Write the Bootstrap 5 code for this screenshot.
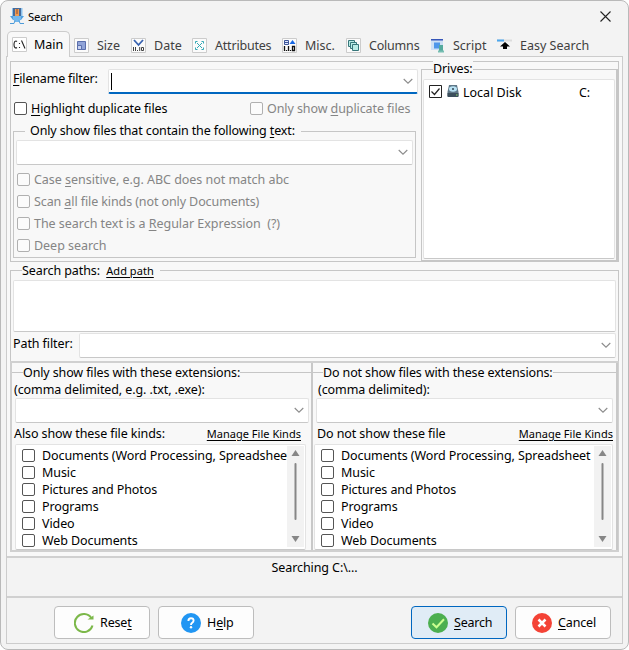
<!DOCTYPE html>
<html lang="en">
<head>
<meta charset="utf-8">
<title>Search</title>
<link href="https://cdn.jsdelivr.net/npm/bootstrap@5.3.0/dist/css/bootstrap.min.css" rel="stylesheet">
<style>
body{width:629px;height:650px;overflow:hidden;background:#fff;color:#000;font:12.5px/17px "Noto Sans","Open Sans",sans-serif;letter-spacing:-.09px}
*{white-space:nowrap}
svg{display:block;flex:none}
.win{width:629px;height:650px;background:#f3f3f3;border:1px solid #b9b9b9;border-radius:8px;padding:0 5px 5px}
.titlebar{height:30px;padding:0 12px 0 4px}
.titlebar .cap{font-size:11.3px;letter-spacing:-.2px;margin-left:4px}
.tabs{height:25px;position:relative;z-index:1;color:#404040;padding-left:1px}
.tabitem{height:26px;padding-top:2px;letter-spacing:0}
.tabitem svg{margin-right:8px}
.tabitem.on{width:63px;border:1px solid #ccc;border-bottom:0;border-radius:5px 5px 0 0;background:#f8f8f8;color:#000;padding:0 0 1px 4px;margin-right:4px}
.tabitem.on svg{margin-right:7px}
.page{height:588px;border:1px solid #ccc;background:#f8f8f8}
.pane{height:499px;padding:4px 3px 0 3px}
.outer{border:1px solid #c6c6c6}
.p1{height:201px}
.fname{height:33px;padding-top:7px}
.inp{background:#fff;border:1px solid #e3e3e3;border-bottom-color:#c8c8c8;border-radius:2px;display:flex;align-items:center;justify-content:flex-end;padding-right:4px}
.inp.act{border-bottom:2px solid #0067c0;height:25px;width:310px;justify-content:space-between;padding-left:2px}
.caret-line{width:1px;height:17px;background:#000}
.cb{width:13px;height:13px;border:1px solid #555;border-radius:2px;background:#fff;flex:none;display:block}
.off{color:#858585;letter-spacing:-.03px}
.off .cb{border-color:#b0b0b0;background:#fbfbfb}
.grp{border:1px solid #c6c6c6}
.lg{display:table;background:#f8f8f8;line-height:16px}
u{text-underline-offset:2px}
.ck{height:22px}
.lnk{font-size:11px;color:#000;text-decoration:underline;text-underline-offset:2px}
.g1{width:403px;height:127px;margin:4px 0 0 2px;padding:0 2px}
.g2{width:197px;height:192px;margin-top:7px;padding:0 1px;border-right-width:2px}
.p2{height:92px;margin-top:8px;padding:0 2px}
.p3{height:191px;border-width:2px 1px 2px 2px;border-color:#d0d0d0}
.col-x{width:299px;padding:9px 0 0 0}
.col-x+.col-x{width:auto;flex:1 1 0;min-width:0;border-left:2px solid #c8c8c8;border-right:2px solid #c8c8c8}
.topl{border-top:1px solid #c6c6c6;height:178px}
.list{height:106px;background:#fff;border:1px solid #e3e3e3;border-bottom-color:#c8c8c8;border-radius:2px;padding:2px 0 0 6px}
.list .names{flex:1 1 0;min-width:0;overflow:hidden}
.list .names>div{height:17px}
.list .names .cb{margin-right:7px;height:13px}
.sb{width:17px;height:101px;background:#f2f2f2;margin:-1px 1px 0 0}
.stat{height:42px;background:#f3f3f3;border-top:2px solid #d0d0d0;border-bottom:2px solid #d0d0d0;padding-top:1px}
.foot{height:45px;background:#f3f3f3;padding:8px 11px 0 47px}
.wbtn{width:96px;height:33px;border:1px solid #bdbdbd;border-radius:4px;background:#fdfdfd;color:#000;font-size:12.5px;padding:0;display:flex;align-items:center;letter-spacing:-.15px}
.wbtn svg{margin:0 6px 0 19px}
.wbtn.prim{background:#e0ecf6;border-color:#0067c0}
</style>
<script src="https://cdn.jsdelivr.net/npm/bootstrap@5.3.0/dist/js/bootstrap.bundle.min.js"></script>
</head>
<body>
<svg width="0" height="0" class="position-absolute"><defs>
<path id="chev" d="M.7 1 5 5.2 9.3 1" fill="none" stroke="#8c8c8c" stroke-width="1.1"/>
<g id="bars"><path d="M8.500 4 12.500 10h-8z" fill="#868686"/><path d="M4.500 90h8l-4 6z" fill="#868686"/><rect x="7.500" y="17" width="2" height="57" rx="1" fill="#868686"/></g>
</defs></svg>
<div class="win">
  <div class="titlebar d-flex align-items-center">
    <svg width="14" height="16" viewBox="0 0 14 16"><path d="M2 0h2.500v9H2zM10 0h2.500v9H10z" fill="#8dc3ee"/><path d="M3 0h8v8H3z" fill="#466c9c"/><path d="M5 1h4v7H5z" fill="#ef9b54"/><path d="M6.500 1h1v5h-1z" fill="#8b4d33"/><path d="M0 8h14l-3 4H3z" fill="#4d9edf"/><path d="M3 8h8v3l-2 3H5l-2-3z" fill="#74b8ed"/><path d="M0 15.500h4l1-3M14 15.500h-4l-1-3" stroke="#4d9bd8" fill="none"/></svg>
    <span class="cap">Search</span>
    <svg class="ms-auto" width="11" height="11" viewBox="0 0 11 11"><path d="M.5.5l10 10M10.500.5l-10 10" stroke="#222" stroke-width="1.100"/></svg>
  </div>
  <div class="tabs d-flex">
    <div class="tabitem on d-flex align-items-center"><svg width="15" height="15" viewBox="0 0 15 15"><path d="M.5.5h14v14H.5z" fill="#fff" stroke="#ccc"/><path d="M5 4.500Q4 3.500 2.800 4.500 2 5.500 2 7.500t.8 3q1.200 1 2.200 0M7.500 6v1M7.500 10v1M9.500 3.500l3.500 8" fill="none" stroke="#222" stroke-width="1.100"/></svg>Main</div>
    <div class="tabitem d-flex align-items-center" style="width:57px"><svg width="15" height="15" viewBox="0 0 15 15"><path d="M.5.5h14v14H.5z" fill="#fbfbfb" stroke="#ccc"/><path d="M3.500 3.500h8v8h-8z" fill="#91a4d8" stroke="#5b6fac"/><path d="M3.500 7.500h4v4h-4z" fill="#c7d2f0" stroke="#5b6fac"/></svg>Size</div>
    <div class="tabitem d-flex align-items-center" style="width:61px"><svg width="15" height="15" viewBox="0 0 15 15"><path d="M.5.5h14v14H.5z" fill="#fbfbfb" stroke="#ccc"/><path d="M3 2l4.500 5L12 2" fill="none" stroke="#3862b0" stroke-width="1.800"/><path d="M2.500 9v4M4.500 9v4M6.500 12v1M8.700 9v4M10.500 9.500h2v3h-2z" fill="none" stroke="#444"/></svg>Date</div>
    <div class="tabitem d-flex align-items-center" style="width:90px"><svg width="15" height="15" viewBox="0 0 15 15"><path d="M.5.5h14v14H.5z" fill="#fbfbfb" stroke="#ccc"/><path d="M3.500 5.500v-2h2M9.500 3.500h2v2M11.500 9.500v2h-2M5.500 11.500h-2v-2M5 5l5 5M10 5l-5 5" fill="none" stroke="#33a8b5"/></svg><span style="letter-spacing:-.2px">Attributes</span></div>
    <div class="tabitem d-flex align-items-center" style="width:64px"><svg width="15" height="15" viewBox="0 0 15 15"><path d="M.5.5h14v14H.5z" fill="#fbfbfb" stroke="#ccc"/><path d="M2.500 2.500h4v4h-4zM2.500 4.500h4" fill="#dfe8ff" stroke="#3c5599"/><path d="M10.500 2l3 4h-6z" fill="#1667e4"/><path d="M2.500 8v5M4.500 12v1M6.500 8v5M8.500 12v1M10.500 8.500h2v4h-2z" fill="none" stroke="#111" stroke-width="1.300"/></svg>Misc.</div>
    <div class="tabitem d-flex align-items-center" style="width:84px"><svg width="15" height="15" viewBox="0 0 15 15"><path d="M.5.5h14v14H.5z" fill="#fbfbfb" stroke="#ccc"/><g fill="#b9ece6" stroke="#36767a"><path d="M2.500 2.500h6v6h-6z"/><path d="M4.500 4.500h6v6h-6z"/><path d="M6.500 6.500h6v6h-6z"/></g></svg><span style="letter-spacing:-.2px">Columns</span></div>
    <div class="tabitem d-flex align-items-center" style="width:67px"><svg width="15" height="15" viewBox="0 0 15 15"><path d="M1 1h12v11H1z" fill="#cfe0f5"/><path d="M1 1h12v1.500H1z" fill="#3555b8"/><path d="M4 4.500h6v6H4z" fill="#4e96ea"/><path d="M9 7h4v7H9z" fill="#55aa9d"/><path d="M8 12.500h6v2H8z" fill="#77beb2"/></svg>Script</div>
    <div class="tabitem d-flex align-items-center"><svg width="15" height="15" viewBox="0 0 15 15"><path d="M0 1.500h15v2H0z" fill="#dcdcdc"/><path d="M0 1.500h7v2H0z" fill="#4ba7ee"/><path d="M8 4l5 4.500h-3V11H6V8.500H3z" fill="#000"/></svg>Easy Search</div>
  </div>
  <div class="page">
    <div class="pane">
      <div class="outer p1 d-flex justify-content-between">
        <div>
          <div class="fname d-flex"><span style="width:97px;padding:1px 0 0 2px;letter-spacing:-.18px"><u>F</u>ilename filter:</span><div class="inp act"><i class="caret-line"></i><svg width="10" height="7"><use href="#chev"/></svg></div></div>
          <div class="d-flex align-items-center" style="height:26px"><span class="d-flex align-items-center" style="width:239px;padding-left:3px"><i class="cb me-1"></i><span><u>H</u>ighlight duplicate files</span></span><span class="off d-flex align-items-center" style="letter-spacing:-.09px"><i class="cb me-1"></i><span>Only show <u>d</u>uplicate files</span></span></div>
          <div class="grp g1" style="margin-top:10px"><div class="lg" style="margin:-9px 0 0 9px;padding:0 6px 0 5px;letter-spacing:-.13px">Only show files that contain the following <u>t</u>ext:</div>
            <div class="inp" style="height:25px;margin-top:1px"><svg width="10" height="7"><use href="#chev"/></svg></div>
            <div class="off" style="padding:3px 0 0 1px">
              <div class="ck d-flex align-items-center"><i class="cb me-1"></i><span>Case <u>s</u>ensitive, e.g. ABC does not match abc</span></div>
              <div class="ck d-flex align-items-center"><i class="cb me-1"></i><span style="letter-spacing:-.1px">Scan <u>a</u>ll file kinds (not only Documents)</span></div>
              <div class="ck d-flex align-items-center"><i class="cb me-1"></i><span>The search text is a <u>R</u>egular Expression &nbsp;(?)</span></div>
              <div class="ck d-flex align-items-center"><i class="cb me-1"></i><span>Deep search</span></div>
            </div>
          </div>
        </div>
        <div class="grp g2"><div class="lg" style="margin:-9px 0 0 10px">Drives:</div>
          <div class="inp d-block" style="height:180px;margin-top:2px;padding:4px 0 0 5px"><div class="d-flex align-items-center"><svg width="13" height="13" viewBox="0 0 13 13" style="margin-top:-3px"><path d="M.5.5h12v12H.5z" fill="#fff" stroke="#222"/><path d="M2.500 6.500l3 3L10.500 3.500" fill="none" stroke="#222" stroke-width="1.200"/></svg>
            <svg width="14" height="14" viewBox="0 0 14 14" style="margin:-3px 0 0 4px"><path d="M3 1h8l1.500 7v4q0 1-1 1h-9q-1 0-1-1V8z" fill="#607888"/><path d="M1.500 9h11v3q0 1-1 1h-9q-1 0-1-1z" fill="#3c4f5c"/><ellipse cx="7" cy="5" rx="4" ry="2.800" fill="#b8e2f4"/><circle cx="7" cy="5" r="1" fill="#345"/><path d="M10 11h1.500" stroke="#8fe06a"/></svg>
            <span style="width:116px;margin-left:3px;letter-spacing:0">Local Disk</span><span>C:</span></div></div>
        </div>
      </div>
      <div class="outer p2"><div class="lg" style="margin:-8px 0 0 9px;padding-right:6px">Search paths: &nbsp;<span class="lnk" style="letter-spacing:.05px">Add path</span></div>
        <div class="inp" style="height:52px;margin-top:1px"></div>
        <div class="d-flex" style="margin-top:1px"><span style="width:66px;padding-top:2px">Path filter:</span><div class="inp flex-fill" style="height:25px"><svg width="10" height="7"><use href="#chev"/></svg></div></div>
      </div>
      <div class="outer p3 d-flex" style="margin-top:-1px">
        <div class="col-x"><div class="topl"><div class="lg" style="margin:-8px 0 0 11px;letter-spacing:-.13px">Only show files with these extensions:</div>
          <div style="height:17px;padding-left:2px">(comma delimited, e.g. .txt, .exe):</div>
          <div class="inp" style="height:25px;margin:0 2px 0 3px"><svg width="10" height="7"><use href="#chev"/></svg></div>
          <div class="d-flex justify-content-between align-items-center" style="height:20px;padding:0 10px 0 2px"><span>Also show these file kinds:</span><span class="lnk" style="letter-spacing:.02px">Manage File Kinds</span></div>
          <div class="list d-flex" style="margin:1px 5px 0 3px"><div class="names">
            <div class="d-flex align-items-center"><i class="cb"></i>Documents (Word Processing, Spreadsheet</div><div class="d-flex align-items-center"><i class="cb"></i>Music</div><div class="d-flex align-items-center"><i class="cb"></i>Pictures and Photos</div><div class="d-flex align-items-center"><i class="cb"></i>Programs</div><div class="d-flex align-items-center"><i class="cb"></i>Video</div><div class="d-flex align-items-center"><i class="cb"></i>Web Documents</div></div>
            <svg class="sb" viewBox="0 0 17 101"><use href="#bars"/></svg></div>
        </div></div>
        <div class="col-x"><div class="topl"><div class="lg" style="margin:-8px 0 0 10px;letter-spacing:-.13px">Do not show files with these extensions:</div>
          <div style="height:17px;padding-left:5px">(comma delimited):</div>
          <div class="inp" style="height:25px;margin:0 3px 0 3px"><svg width="10" height="7"><use href="#chev"/></svg></div>
          <div class="d-flex justify-content-between align-items-center" style="height:20px;padding:0 3px 0 4px"><span>Do not show these file</span><span class="lnk" style="letter-spacing:.02px">Manage File Kinds</span></div>
          <div class="list d-flex" style="margin:1px 3px 0 1px"><div class="names">
            <div class="d-flex align-items-center"><i class="cb"></i>Documents (Word Processing, Spreadsheet</div><div class="d-flex align-items-center"><i class="cb"></i>Music</div><div class="d-flex align-items-center"><i class="cb"></i>Pictures and Photos</div><div class="d-flex align-items-center"><i class="cb"></i>Programs</div><div class="d-flex align-items-center"><i class="cb"></i>Video</div><div class="d-flex align-items-center"><i class="cb"></i>Web Documents</div></div>
            <svg class="sb" viewBox="0 0 17 101"><use href="#bars"/></svg></div>
        </div></div>
      </div>
    </div>
    <div class="stat text-center">Searching C:\...</div>
    <div class="foot d-flex">
      <button class="wbtn"><svg width="20" height="20" viewBox="0 0 20 20"><path d="M17.300 5A9 9 0 1 0 18.500 12.500" fill="none" stroke="#7cb84a" stroke-width="2"/><path d="M13.500 6.500h6V2.500z" fill="#7cb84a"/></svg><span>Rese<u>t</u></span></button>
      <button class="wbtn ms-2"><svg style="margin-left:22px" width="20" height="20" viewBox="0 0 20 20"><circle cx="10" cy="10" r="10" fill="#2196f3"/><path d="M7.400 8q0-2.800 2.600-2.800T12.600 7.600q0 1.400-1.500 2.200Q10 10.400 10 12" fill="none" stroke="#fff" stroke-width="1.900"/><circle cx="10" cy="14.300" r="1.200" fill="#fff"/></svg><span>H<u>e</u>lp</span></button>
      <button class="wbtn prim ms-auto"><svg style="margin-left:16px" width="20" height="20" viewBox="0 0 20 20"><circle cx="10" cy="10" r="10" fill="#4caf50"/><path d="M4.500 10.500l4 3.800 7.500-8" fill="none" stroke="#ccff90" stroke-width="2"/></svg><span style="letter-spacing:-.2px"><u>S</u>earch</span></button>
      <button class="wbtn ms-2"><svg style="margin-left:16px" width="20" height="20" viewBox="0 0 20 20"><circle cx="10" cy="10" r="10" fill="#f44336"/><path d="M6.500 6.500l7 7M13.500 6.500l-7 7" stroke="#fff" stroke-width="2.500"/></svg><span><u>C</u>ancel</span></button>
    </div>
  </div>
</div>
</body>
</html>
